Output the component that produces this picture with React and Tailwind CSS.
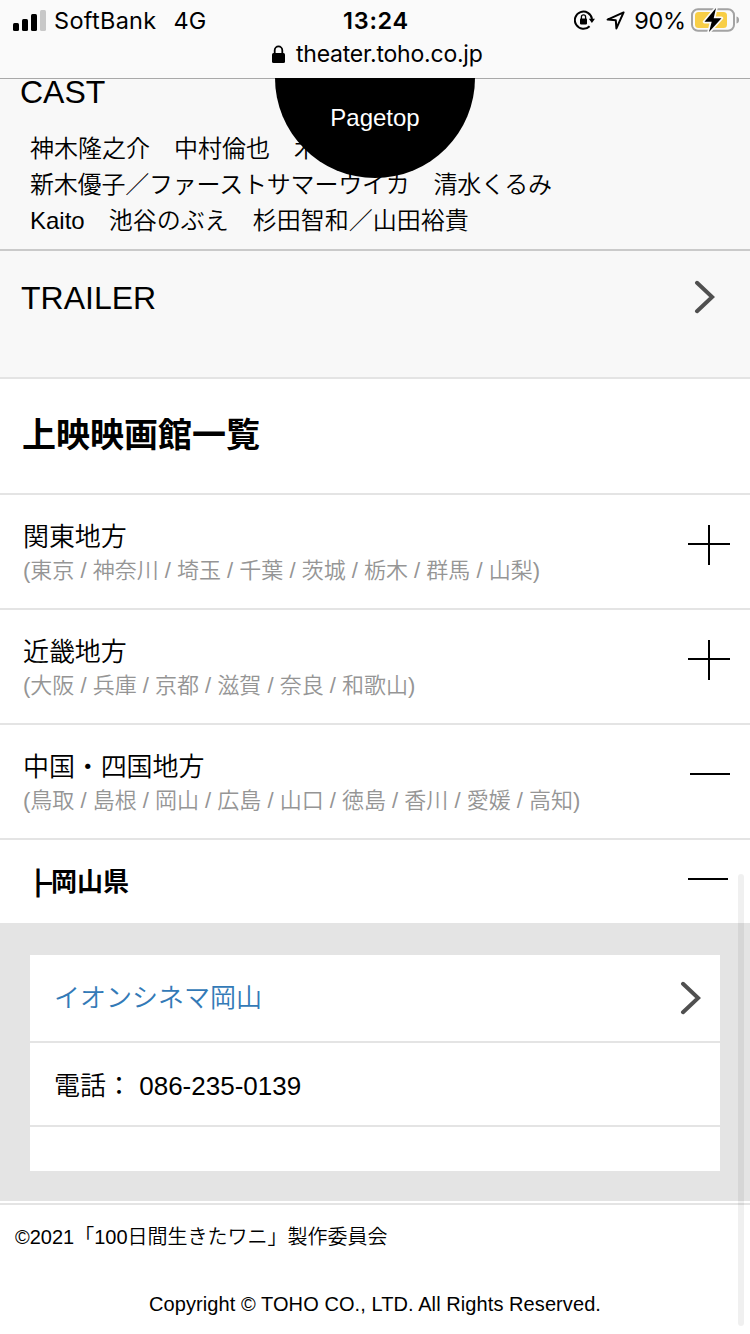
import React from 'react';

const areas = [
  { name: '関東地方', prefs: '(東京 / 神奈川 / 埼玉 / 千葉 / 茨城 / 栃木 / 群馬 / 山梨)', open: false },
  { name: '近畿地方', prefs: '(大阪 / 兵庫 / 京都 / 滋賀 / 奈良 / 和歌山)', open: false },
  { name: '中国・四国地方', prefs: '(鳥取 / 島根 / 岡山 / 広島 / 山口 / 徳島 / 香川 / 愛媛 / 高知)', open: true },
];

function StatusBar() {
  return (
    <div className="flex h-10 items-center justify-between pl-[13px] pr-[11px] font-['Inter',sans-serif] text-[23.5px] leading-10">
      <div className="flex w-[320px] items-center">
        <svg className="h-[21px] w-[33px]" viewBox="0 0 33 21">
          <rect x="0" y="13" width="6" height="8" rx="1.5" />
          <rect x="9" y="9" width="6" height="12" rx="1.5" />
          <rect x="18" y="4" width="6" height="17" rx="1.5" />
          <rect x="27" y="0" width="6" height="21" rx="1.5" fill="#c8c8c8" />
        </svg>
        <span className="ml-2 mt-px tracking-[0.3px]">SoftBank</span>
        <span className="ml-[17px] mt-px">4G</span>
      </div>
      <span className="mt-px font-semibold tracking-[0.7px]">13:24</span>
      <div className="flex w-[320px] items-center justify-end">
        <svg className="h-[20px] w-[21px]" viewBox="0 0 21 20" fill="none">
          <path d="M15.6 16.2A8.6 8.6 0 1 1 18 9" stroke="#000" strokeWidth="2" />
          <path d="M14.8 8.8h6.2l-3.1 4.2z" fill="#000" />
          <rect x="6" y="8.6" width="7" height="5.8" rx="0.8" fill="#000" />
          <path d="M7.4 9V7a2.1 2.1 0 0 1 4.2 0v2" stroke="#000" strokeWidth="1.3" />
        </svg>
        <svg className="ml-[11px] h-[19px] w-[19px]" viewBox="0 0 19 19" fill="none">
          <path d="M17.6 1.4 1.6 8.6l8.2.6.6 8.2z" stroke="#000" strokeWidth="2" strokeLinejoin="round" />
        </svg>
        <span className="ml-[9px] mt-px tracking-[-0.2px]">90%</span>
        <svg className="ml-[5px] h-[26px] w-[48px]" viewBox="0 0 48 26">
          <rect x="1" y="2.2" width="42" height="21.6" rx="6" fill="none" stroke="#a3a3a3" strokeWidth="2" />
          <rect x="4" y="5" width="32" height="16" rx="3.5" fill="#f8ce46" />
          <path d="M45.5 9.5c2 .5 2.5 1.8 2.5 3.5s-.5 3-2.5 3.5z" fill="#a3a3a3" />
          <path d="M25 1 13.5 14.8h7.2L18 25l12.5-13.8h-7.8z" fill="#000" stroke="#fafafa" strokeWidth="3.4" paintOrder="stroke" strokeLinejoin="round" />
        </svg>
      </div>
    </div>
  );
}

function ArrowRight() {
  return (
    <svg className="h-[34px] w-[21px]" viewBox="0 0 21 34" fill="none">
      <path d="M3 2.8 18.2 17 3 31.2" stroke="#505050" strokeWidth="4" strokeLinecap="round" />
    </svg>
  );
}

function Toggle({ open }) {
  if (open) {
    return <div className="mt-[48px] h-0.5 w-10 bg-black" />;
  }
  return (
    <svg className="mt-[30px] h-10 w-[42px]" viewBox="0 0 42 40">
      <path d="M0 18h42v2H0zM20 0h2v40h-2z" />
    </svg>
  );
}

function App() {
  return (
    <div className="relative h-[1334px] w-[750px] overflow-hidden bg-white font-['Liberation_Sans','Noto_Sans_CJK_JP',sans-serif] text-black">
      <header className="h-[79px] border-b border-[#a9a9a9] bg-[#fafafa]">
        <StatusBar />
        <div className="flex h-7 items-center pl-[272px] font-['Inter',sans-serif] text-[23px]">
          <svg className="h-[18px] w-[13px]" viewBox="0 0 13 18">
            <rect x="0" y="8" width="13" height="10" rx="1.5" />
            <path d="M2.7 9V5.2a3.8 3.8 0 0 1 7.6 0V9" fill="none" stroke="#000" strokeWidth="1.8" />
          </svg>
          <span className="ml-[11px] tracking-[-0.22px]">theater.toho.co.jp</span>
        </div>
      </header>

      <section className="relative h-[172px] border-b-2 border-[#cacaca] bg-[#f8f8f8]">
        <h2 className="pl-5 text-[32px] leading-[27px]">CAST</h2>
        <div className="pl-[30px] pt-[25px] text-2xl leading-9 font-[350]">
          <p>神木隆之介　中村倫也　木村昴</p>
          <p className="tracking-[-0.2px]">新木優子／ファーストサマーウイカ　清水くるみ</p>
          <p>Kaito　池谷のぶえ　杉田智和／山田裕貴</p>
        </div>
        <a className="absolute -top-px left-[275px] flex h-[100px] w-[200px] justify-center rounded-b-full bg-black pt-[22px] text-2xl leading-9 text-white">
          Pagetop
        </a>
      </section>

      <section className="flex h-32 items-start justify-between border-b-2 border-[#e4e4e4] bg-[#f8f8f8] pl-[21px] pr-[35px] pt-[29px]">
        <h2 className="text-[32px] leading-9">TRAILER</h2>
        <ArrowRight />
      </section>

      <section>
        <h2 className="flex h-[116px] items-center border-b-2 border-[#e4e4e4] pb-0.5 pl-[22px] text-[34px] font-bold">上映映画館一覧</h2>
        {areas.map((area) => (
          <div key={area.name} className="flex h-[115px] items-start justify-between border-b-2 border-[#e4e4e4] pl-[23px] pr-5">
            <div className="pt-[22px]">
              <h3 className="text-[26px] leading-10 tracking-[-0.1px] font-[350]">{area.name}</h3>
              <p className="text-[22px] leading-7 font-[350] text-[#959595]">{area.prefs}</p>
            </div>
            <Toggle open={area.open} />
          </div>
        ))}
        <div className="flex h-[83px] items-start justify-between pl-[25px] pr-[22px]">
          <h3 className="flex pt-[22px] text-[26px] leading-10 font-bold">
            <span className="w-[26px] font-['Noto_Sans_CJK_JP',sans-serif] [-webkit-text-stroke:2px_black]">├</span>
            岡山県
          </h3>
          <div className="mt-[38px] h-0.5 w-10 bg-black" />
        </div>
        <div className="h-[278px] bg-[#e4e4e4] px-[30px] pt-8">
          <div className="h-[216px] bg-white text-[26px] font-[350]">
            <a className="flex h-[88px] items-center justify-between border-b-2 border-[#e4e4e4] pl-6 pr-[19px] text-[#337ab7]">
              イオンシネマ岡山
              <ArrowRight />
            </a>
            <p className="flex h-[84px] items-center border-b-2 border-[#e4e4e4] pl-6 pt-[5px] whitespace-pre">電話： 086-235-0139</p>
          </div>
        </div>
      </section>

      <footer className="mt-0.5 border-t-2 border-[#e4e4e4] text-xl font-[350]">
        <p className="pl-[15px] pt-4 leading-8">©2021「100日間生きたワニ」製作委員会</p>
        <p className="pt-[35px] text-center leading-8 tracking-[0.08px]">Copyright © TOHO CO., LTD. All Rights Reserved.</p>
      </footer>

      <div className="absolute left-[738px] top-[874px] h-[452px] w-1.5 rounded-full bg-black/6" />
    </div>
  );
}

export default App;
